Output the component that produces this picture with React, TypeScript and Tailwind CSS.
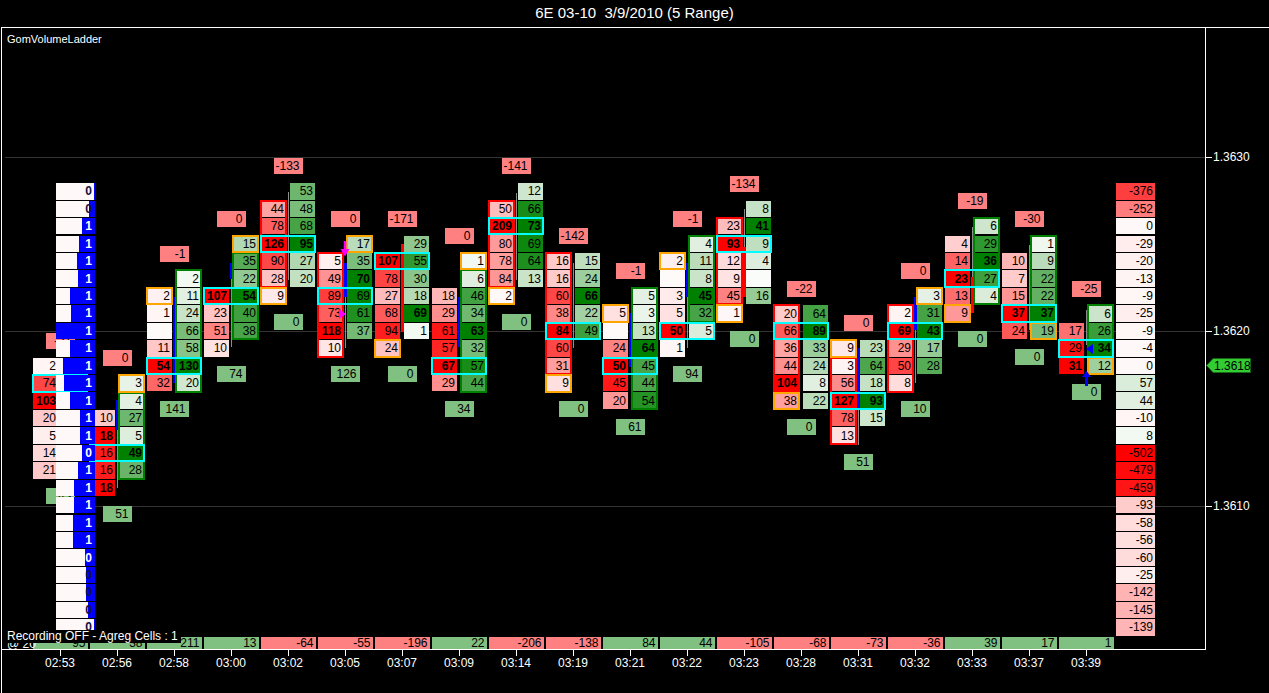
import React from 'react';

type Side = 'bid' | 'ask';

type Bar = {
  time: string;
  bk: number;
  bid: (number | null)[];
  ak: number;
  ask: (number | null)[];
  poc: number;
  mark?: [Side, number];
  frame?: [Side, number, number];
  delta: string;
  vol: string;
  total: number;
  wick?: [number, number];
  body?: [number, number, string];
  fade?: Record<string, number>;
};

// one price tick = 17.45px, k = ticks above 1.3620 (y 331 on screen)
const ROW = 17.45;
const rowY = (k: number) => 331 - k * ROW;

const red = (t: number) => {
  const g = Math.round(250 * (1 - t));
  return `rgb(255,${g},${g})`;
};
const green = (t: number) =>
  `rgb(${Math.round(246 * (1 - t))},${Math.round(250 - 122 * t)},${Math.round(246 * (1 - t))})`;

const bars: Bar[] = [
  { time: '02:53', bk: -2, bid: [2, 74, 103, 20, 5, 14, 21], ak: -2, ask: [], poc: -3, delta: '-31', vol: '43', total: 95 },
  { time: '02:56', bk: -5, bid: [10, 18, 16, 16, 18], ak: -3, ask: [3, 4, 27, 5, 49, 28], poc: -7, mark: ['ask', -3], frame: ['ask', -4, -8], delta: '0', vol: '51', total: 38, body: [400, 430, '#0000ff'], wick: [430, 488], fade: { 'bid:-5': 0.2 } },
  { time: '02:58', bk: 2, bid: [2, 1, null, 11, 54, 32], ak: 3, ask: [2, 11, 24, 66, 58, 130, 20], poc: -2, mark: ['bid', 2], frame: ['ask', 3, -3], delta: '-1', vol: '141', total: 211, body: [297, 383, '#0000ff'] },
  { time: '03:00', bk: 2, bid: [107, 23, 51, 10], ak: 5, ask: [15, 35, 22, 54, 40, 38], poc: 2, mark: ['ask', 5], frame: ['ask', 4, 0], delta: '0', vol: '74', total: 13, body: [263, 279, '#0000ff'], wick: [279, 347] },
  { time: '03:02', bk: 7, bid: [44, 78, 126, 90, 28, 9], ak: 8, ask: [53, 48, 68, 95, 27, 20], poc: 5, mark: ['bid', 2], frame: ['bid', 7, 3], delta: '-133', vol: '0', total: -64, wick: [192, 280] },
  { time: '03:05', bk: 4, bid: [5, 49, 89, 73, 118, 10], ak: 5, ask: [17, 35, 70, 69, 61, 37], poc: 2, mark: ['ask', 5], frame: ['bid', 4, -1], delta: '0', vol: '126', total: -55, body: [263, 297, '#0000ff'], wick: [297, 348] },
  { time: '03:07', bk: 4, bid: [107, 78, 27, 68, 94, 24], ak: 5, ask: [29, 55, 30, 18, 69, 1], poc: 4, mark: ['bid', -1], delta: '-171', vol: '0', total: -196, body: [244, 332, '#ff0000'] },
  { time: '03:09', bk: 2, bid: [18, 29, 61, 57, 67, 29], ak: 4, ask: [1, 6, 46, 34, 63, 32, 57, 44], poc: -2, mark: ['ask', 4], frame: ['ask', 3, -3], delta: '0', vol: '34', total: 22, body: [297, 347, '#0000ff'] },
  { time: '03:14', bk: 7, bid: [50, 209, 80, 78, 84, 2], ak: 8, ask: [12, 66, 73, 69, 64, 13], poc: 6, mark: ['bid', 2], frame: ['bid', 7, 3], delta: '-141', vol: '0', total: -206, wick: [193, 280] },
  { time: '03:19', bk: 4, bid: [16, 16, 60, 38, 84, 60, 31, 9], ak: 4, ask: [15, 24, 66, 22, 49], poc: 0, mark: ['bid', -3], frame: ['bid', 4, -2], delta: '-142', vol: '0', total: -138, wick: [263, 348] },
  { time: '03:21', bk: 1, bid: [5, null, 24, 50, 45, 20], ak: 2, ask: [5, 3, 13, 64, 45, 44, 54], poc: -2, mark: ['bid', 1], frame: ['ask', 2, -4], delta: '-1', vol: '61', total: 84, body: [313, 367, '#0000ff'] },
  { time: '03:22', bk: 4, bid: [2, null, 3, 5, 50, 1], ak: 5, ask: [4, 11, 8, 45, 32, 5], poc: 0, mark: ['bid', 4], frame: ['ask', 5, 1], delta: '-1', vol: '94', total: 44, body: [263, 297, '#0000ff'], wick: [297, 348] },
  { time: '03:23', bk: 6, bid: [23, 93, 12, 9, 45, 1], ak: 7, ask: [8, 41, 9, 4, null, 16], poc: 5, mark: ['bid', 1], frame: ['bid', 6, 2], delta: '-134', vol: '0', total: -105, body: [247, 297, '#ff0000'], wick: [209, 247] },
  { time: '03:28', bk: 1, bid: [20, 66, 36, 44, 104, 38], ak: 1, ask: [64, 89, 33, 24, 8, 22], poc: 0, mark: ['bid', -4], frame: ['bid', 1, -3], delta: '-22', vol: '0', total: -68 },
  { time: '03:31', bk: -1, bid: [9, 3, 56, 127, 78, 13], ak: -1, ask: [23, 64, 18, 93, 15], poc: -4, mark: ['bid', -1], frame: ['bid', -2, -6], delta: '0', vol: '51', total: -73, body: [348, 408, '#0000ff'], wick: [408, 445] },
  { time: '03:32', bk: 1, bid: [2, 69, 29, 50, 8], ak: 2, ask: [3, 31, 43, 17, 28], poc: 0, mark: ['ask', 2], frame: ['bid', 1, -3], delta: '0', vol: '10', total: -36, body: [297, 330, '#0000ff'], wick: [330, 383] },
  { time: '03:33', bk: 5, bid: [4, 14, 23, 13, 9], ak: 6, ask: [6, 29, 36, 27, 4], poc: 3, mark: ['bid', 1], frame: ['ask', 6, 2], delta: '-19', vol: '0', total: 39, body: [277, 313, '#ff0000'], wick: [227, 277] },
  { time: '03:37', bk: 4, bid: [10, 7, 15, 37, 24], ak: 5, ask: [1, 9, 22, 22, 37, 19], poc: 1, mark: ['ask', 0], frame: ['ask', 5, 1], delta: '-30', vol: '0', total: 17, wick: [245, 330] },
  { time: '03:39', bk: 0, bid: [17, 29, 31], ak: 1, ask: [6, 26, 34, 12], poc: -1, mark: ['ask', -2], frame: ['ask', 1, -1], delta: '-25', vol: '0', total: 1, wick: [310, 345] },
];

// left ladder: x where the blue part starts, and the count shown (rows k = 8 .. -17)
const leftLadder: [number, string][] = [
  [94, '0'], [89, '0'], [82, '1'], [79, '1'], [77, '1'], [78, '1'], [70, '1'], [71, '1'], [56, '1'],
  [70, '1'], [63, '1'], [64, '1'], [70, '1'], [80, '1'], [80, '1'], [82, '0'], [78, '1'], [74, '1'],
  [74, '1'], [73, '1'], [73, '1'], [85, '0'], [86, '0'], [86, '0'], [88, '0'], [94, '0'],
];

const rightLadder = [
  -376, -252, 0, -29, -20, -13, -9, -25, -9, -4, 0, 57, 44, -10, 8,
  -502, -479, -459, -93, -58, -56, -60, -25, -142, -145, -139,
];

const prices = [
  { top: 129, label: '1.3630' },
  { top: 303, label: '1.3620' },
  { top: 478, label: '1.3610' },
];

function BarColumn({ b }: { b: Bar }) {
  const bidMax = Math.max(1, ...b.bid.map((v) => v ?? 0));
  const askMax = Math.max(1, ...b.ask.map((v) => v ?? 0));
  const topK = Math.max(b.bk, b.ask.length ? b.ak : -99);
  const botK = Math.min(b.bk - b.bid.length + 1, b.ask.length ? b.ak - b.ask.length + 1 : 99);
  const rows: number[] = [];
  for (let k = topK; k >= botK; k--) rows.push(k);

  const gridTop = rowY(topK) - 8.725;
  const off = (k: number) => (topK - k) * ROW + 0.525;
  const sideLeft = (s: Side) => (s === 'bid' ? -1 : 28);

  const cell = (side: Side, k: number) => {
    const list = side === 'bid' ? b.bid : b.ask;
    const i = (side === 'bid' ? b.bk : b.ak) - k;
    if (i < 0 || i >= list.length) return <div key={side + k} />;
    const v = list[i];
    const max = side === 'bid' ? bidMax : askMax;
    const t = b.fade?.[`${side}:${k}`] ?? (v ?? 0) / max;
    const bg = v === null ? (side === 'bid' ? '#fffafa' : '#fafcfa') : side === 'bid' ? red(t) : green(t);
    return (
      <div
        key={side + k}
        className={`mt-[0.5px] h-[16.4px] flex items-center justify-end pr-[2px] text-[12px] leading-none text-black ${v === max ? 'font-bold' : ''}`}
        style={{ background: bg }}
      >
        {v ?? ''}
      </div>
    );
  };

  return (
    <div className="w-[57px] shrink-0 flex flex-col items-center" style={{ paddingTop: 270 - ROW * topK }}>
      <div className="w-[29px] h-4 flex items-center justify-end pr-[3px] bg-[#ff8080] text-black text-[12px] leading-none">
        {b.delta}
      </div>

      <div className="relative mt-[8.275px] grid grid-cols-[25px_25px] gap-x-1 auto-rows-[17.45px]">
        {rows.map((k) => (
          <React.Fragment key={k}>
            {cell('bid', k)}
            {cell('ask', k)}
          </React.Fragment>
        ))}

        {b.wick && (
          <div className="absolute left-[27px] w-px bg-[#8c8c8c]" style={{ top: b.wick[0] - gridTop, height: b.wick[1] - b.wick[0] }} />
        )}
        {b.body && (
          <div className="absolute left-[26px] w-[3px]" style={{ top: b.body[0] - gridTop, height: b.body[1] - b.body[0], background: b.body[2] }} />
        )}
        {b.frame && (
          <div
            className={`absolute w-[27px] border-2 ${b.frame[0] === 'bid' ? 'border-[#ff0000]' : 'border-[#008000]'}`}
            style={{ left: sideLeft(b.frame[0]), top: off(b.frame[1]) - 1, height: (b.frame[1] - b.frame[2]) * ROW + 18.4 }}
          />
        )}
        {b.mark && (
          <div
            className="absolute w-[27px] h-[18.4px] border-2 border-[#ffa500]"
            style={{ left: sideLeft(b.mark[0]), top: off(b.mark[1]) - 1 }}
          />
        )}
        <div className="absolute -left-px w-[56px] h-[18.4px] border-2 border-[#00ffff]" style={{ top: off(b.poc) - 1 }} />
      </div>

      <div className="mt-[9.275px] w-[29px] h-4 flex items-center justify-end pr-[3px] bg-[#80c080] text-black text-[12px] leading-none">
        {b.vol}
      </div>
    </div>
  );
}

function LeftLadder() {
  return (
    <div className="absolute z-20 left-[54px] top-[155.2px] w-[39px] flex flex-col gap-[1.05px]">
      {leftLadder.map(([start, n], i) => (
        <div key={i} className="relative h-[16.4px] flex justify-end bg-[#fff8f8]">
          <div className="h-full bg-[#0000ff]" style={{ width: 95 - start }} />
          <span
            className={`absolute right-[3px] inset-y-0 flex items-center text-[12px] leading-none font-bold ${start <= 85 ? 'text-white' : 'text-[#101040]'}`}
          >
            {n}
          </span>
        </div>
      ))}
    </div>
  );
}

function RightLadder() {
  return (
    <div className="ml-[1.5px] pt-[155.2px] w-[39px] shrink-0 flex flex-col gap-[1.05px]">
      {rightLadder.map((v, i) => (
        <div
          key={i}
          className="h-[16.4px] flex items-center justify-end pr-[2px] text-[12px] leading-none text-black"
          style={{ background: v < 0 ? red(-v / 502) : v > 0 ? green(v / 502) : '#fff8f8' }}
        >
          {v}
        </div>
      ))}
    </div>
  );
}

function Markers() {
  return (
    <>
      <svg className="absolute z-20 left-[338px] top-[213px]" width="10" height="16" viewBox="0 0 10 16">
        <path d="M5 0 V9" stroke="#ff00ff" strokeWidth="2.5" />
        <polygon points="0.5,8 9.5,8 5,15.5" fill="#ff00ff" />
      </svg>
      <svg className="absolute z-20 left-[337px] top-[281px]" width="7" height="10" viewBox="0 0 7 10">
        <polygon points="0,0 7,5 0,10" fill="#ff00ff" />
      </svg>
      <svg className="absolute z-20 left-[1084px] top-[316px]" width="7" height="10" viewBox="0 0 7 10">
        <polygon points="7,0 0,5 7,10" fill="#0000ff" />
      </svg>
      <svg className="absolute z-20 left-[1080px] top-[343px]" width="9" height="15" viewBox="0 0 9 15">
        <polygon points="4.5,0 9,6 0,6" fill="#0000ff" />
        <rect x="3" y="5" width="3" height="10" fill="#0000ff" />
      </svg>
    </>
  );
}

export default function App() {
  return (
    <div className="w-[1269px] h-[693px] bg-black text-white overflow-hidden flex flex-col font-['Liberation_Sans',Arial,sans-serif]">
      <header className="h-[27px] shrink-0 flex items-center justify-center text-[15px] whitespace-pre">
        6E 03-10  3/9/2010 (5 Range)
      </header>

      <div className="flex-1 flex ml-px border-l border-t border-white">
        <div className="w-[1204px] shrink-0 flex flex-col">
          <div className="relative flex flex-col border-r border-b border-white">
            {/* price panel */}
            <div className="relative h-[609px]">
              <div className="absolute left-[5px] top-[6px] text-[11px] leading-none">GomVolumeLadder</div>
              {prices.map((p) => (
                <div key={p.label} className="absolute left-[3px] right-0 h-px bg-[#333333]" style={{ top: p.top }} />
              ))}

              <div className="relative z-10 flex pl-[29.5px]">
                {bars.map((b) => (
                  <BarColumn key={b.time} b={b} />
                ))}
                <RightLadder />
              </div>

              <LeftLadder />
              <Markers />
            </div>

            {/* bar deltas */}
            <div className="h-3 flex pl-[29.5px]">
              {bars.map((b) => (
                <div key={b.time} className="w-[57px] shrink-0 px-px">
                  <div
                    className={`h-3 flex items-center justify-end pr-[2px] text-[12px] leading-3 text-black ${b.total < 0 ? 'bg-[#ff8080]' : 'bg-[#80c080]'}`}
                  >
                    {b.total}
                  </div>
                </div>
              ))}
            </div>

            <div className="absolute z-30 left-[5px] -bottom-px text-[12px] leading-none">@ 20</div>
            <div className="absolute z-30 left-[3px] bottom-[6px] bg-black pl-[2px] pr-[3px] text-[12px] leading-[13px]">
              Recording OFF - Agreg Cells : 1
            </div>
          </div>

          {/* time axis */}
          <div className="flex pl-[29.5px]">
            {bars.map((b) => (
              <div key={b.time} className="w-[57px] shrink-0 flex flex-col items-center">
                <div className="w-px h-[6px] bg-white" />
                <div className="mt-px text-[12px] leading-none">{b.time}</div>
              </div>
            ))}
          </div>
        </div>

        {/* price axis */}
        <div className="relative flex-1">
          {prices.map((p) => (
            <React.Fragment key={p.label}>
              <div className="absolute left-0 w-[6px] h-px bg-white" style={{ top: p.top }} />
              <div className="absolute left-[7px] text-[12px] leading-[14px]" style={{ top: p.top - 7 }}>
                {p.label}
              </div>
            </React.Fragment>
          ))}
          <div className="absolute left-0 top-[330px] w-[45px] h-[15px]">
            <svg width="45" height="15" viewBox="0 0 45 15">
              <polygon points="0.5,7.5 7,0.5 44.5,0.5 44.5,14.5 7,14.5" fill="#33cc33" stroke="#176617" />
            </svg>
            <div className="absolute inset-0 pl-2 flex items-center text-[12px] leading-none text-black">1.3618</div>
          </div>
        </div>
      </div>
    </div>
  );
}
